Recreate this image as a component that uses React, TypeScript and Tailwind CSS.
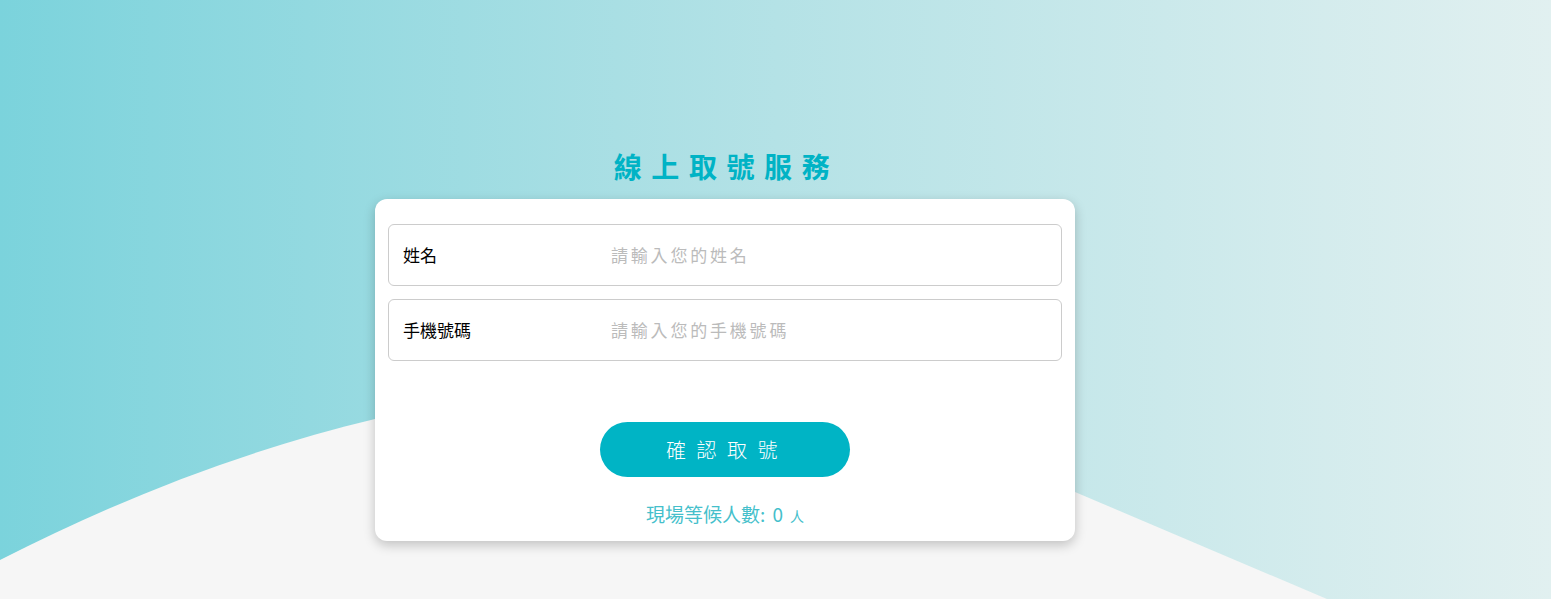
import React from 'react';

const fields = [
  { label: '姓名', placeholder: '請輸入您的姓名' },
  { label: '手機號碼', placeholder: '請輸入您的手機號碼' },
];

const App = () => {
  return (
    <div className="relative h-screen w-full overflow-hidden bg-gradient-to-r from-[#7bd3dc] via-[#b4e2e6] to-[#e1f0f0] font-['Noto_Sans_CJK_TC',sans-serif]">
      {/* background wave */}
      <svg className="absolute inset-0 h-full w-full" viewBox="0 0 1551 599" preserveAspectRatio="none">
        <path
          d="M0,560 C125,496 250,449 375,419 C525,383 925,429 1075,492 L1400,630 L0,630 Z"
          fill="#f6f6f6"
        />
      </svg>

      <div className="relative flex flex-col items-center pt-[146px] pr-[101px]">
        <h1 className="mb-[13px] pl-[3px] text-[28px] font-bold leading-[40px] tracking-[9.6px] text-[#00b3c5]">
          線上取號服務
        </h1>

        <div className="flex w-[700px] flex-col rounded-[12px] bg-white px-[13px] pt-[25px] pb-[12px] shadow-[0_4px_12px_rgba(0,0,0,0.22)]">
          <div className="flex flex-col gap-[13px]">
            {fields.map((f) => (
              <div
                key={f.label}
                className="flex h-[62px] items-center rounded-[6px] border border-[#cccccc]"
              >
                <span className="w-[222px] pl-[14px] text-[17px] text-black">{f.label}</span>
                <input
                  className="flex-1 bg-transparent pr-4 text-[17px] tracking-[2.8px] outline-none placeholder:text-[#bbbbbb]"
                  placeholder={f.placeholder}
                />
              </div>
            ))}
          </div>

          <button className="mx-auto mt-[61px] h-[55px] w-[250px] rounded-full bg-[#00b4c5] pl-[4px] text-[20px] font-light tracking-[10.5px] text-white">
            確認取號
          </button>

          <p className="mt-[24px] text-center text-[19px] leading-[26px] text-[#45bfcb]">
            現場等候人數:<span className="mx-[7px]">0</span>
            <span className="text-[14px]">人</span>
          </p>
        </div>
      </div>
    </div>
  );
};

export default App;
